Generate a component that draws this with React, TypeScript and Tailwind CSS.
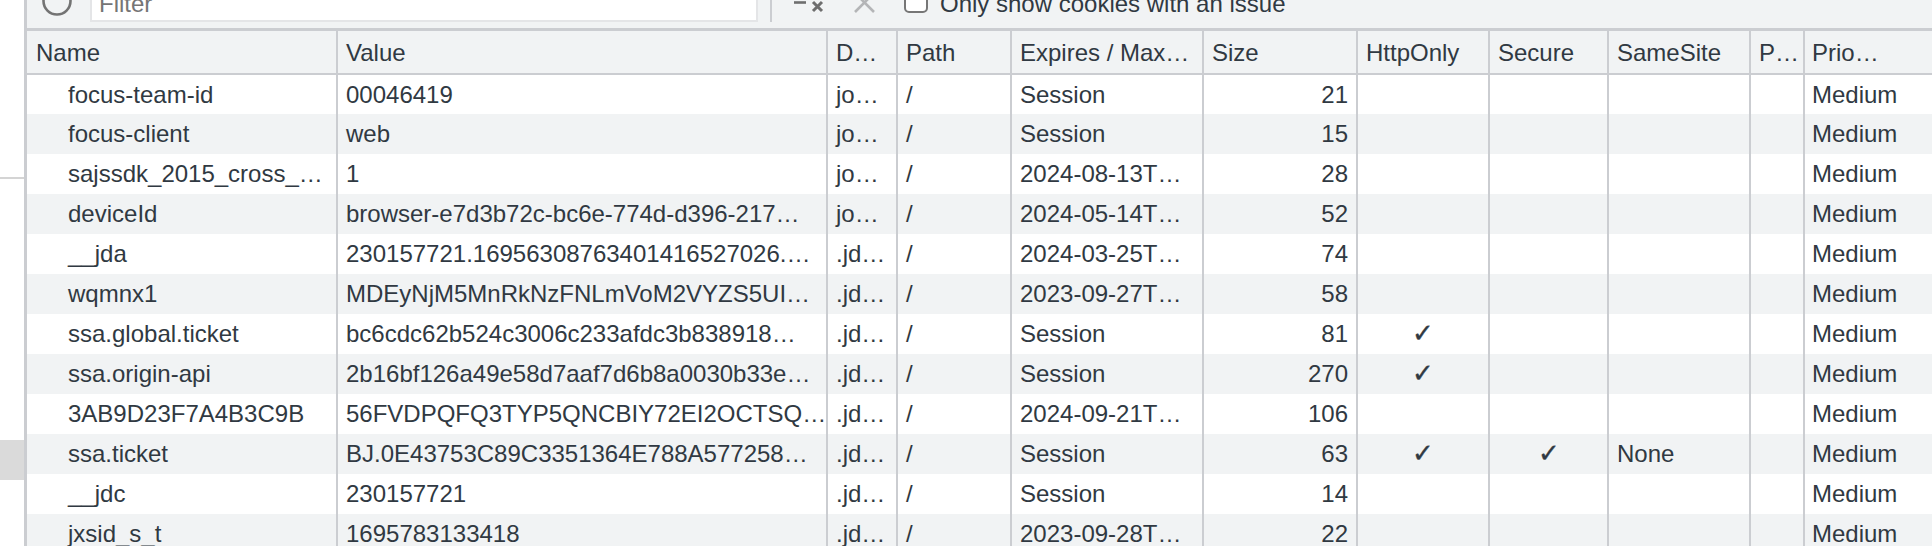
const widths = [310, 490, 70, 114, 192, 154, 132, 119, 142, 54, 129];

const rows: string[][] = [
  ["focus-team-id", "00046419", "jo…", "/", "Session", "21", "", "", "", "", "Medium"],
  ["focus-client", "web", "jo…", "/", "Session", "15", "", "", "", "", "Medium"],
  ["sajssdk_2015_cross_…", "1", "jo…", "/", "2024-08-13T…", "28", "", "", "", "", "Medium"],
  ["deviceId", "browser-e7d3b72c-bc6e-774d-d396-217…", "jo…", "/", "2024-05-14T…", "52", "", "", "", "", "Medium"],
  ["__jda", "230157721.16956308763401416527026.…", ".jd…", "/", "2024-03-25T…", "74", "", "", "", "", "Medium"],
  ["wqmnx1", "MDEyNjM5MnRkNzFNLmVoM2VYZS5UI…", ".jd…", "/", "2023-09-27T…", "58", "", "", "", "", "Medium"],
  ["ssa.global.ticket", "bc6cdc62b524c3006c233afdc3b838918…", ".jd…", "/", "Session", "81", "✓", "", "", "", "Medium"],
  ["ssa.origin-api", "2b16bf126a49e58d7aaf7d6b8a0030b33e…", ".jd…", "/", "Session", "270", "✓", "", "", "", "Medium"],
  ["3AB9D23F7A4B3C9B", "56FVDPQFQ3TYP5QNCBIY72EI2OCTSQ…", ".jd…", "/", "2024-09-21T…", "106", "", "", "", "", "Medium"],
  ["ssa.ticket", "BJ.0E43753C89C3351364E788A577258…", ".jd…", "/", "Session", "63", "✓", "✓", "None", "", "Medium"],
  ["__jdc", "230157721", ".jd…", "/", "Session", "14", "", "", "", "", "Medium"],
  ["jxsid_s_t", "1695783133418", ".jd…", "/", "2023-09-28T…", "22", "", "", "", "", "Medium"],
];

const headers = ["Name", "Value", "D…", "Path", "Expires / Max…", "Size", "HttpOnly", "Secure", "SameSite", "P…", "Prio…"];

function cellClass(col: number) {
  const base = "overflow-hidden whitespace-nowrap p-0 align-middle";
  const border = col < 10 ? " border-r-2 border-[#cbcdd1]" : "";
  if (col === 0) return base + border + " pl-[41px]";
  if (col === 5) return base + border + " pr-[8px] text-right";
  if (col === 6 || col === 7) return base + border + " text-center";
  if (col === 10) return base + border + " pl-[7px]";
  return base + border + " pl-[8px]";
}

function headerPad(col: number) {
  if (col === 0) return "pl-[9px]";
  if (col === 10) return "pl-[7px]";
  return "pl-[8px]";
}

export default function App() {
  return (
    <div className="flex h-[546px] w-[1932px] overflow-hidden bg-white font-['Liberation_Sans',Arial,sans-serif] text-[24px] text-[#303942]">
      <div className="w-[24px] shrink-0">
        <div className="mt-[177px] h-[2px] bg-[#d4d4d4]" />
        <div className="mt-[261px] h-[40px] bg-[#dadada]" />
      </div>
      <div className="flex min-w-0 flex-1 flex-col border-l-[3px] border-[#cbcdd1]">
        <div className="flex h-[28px] shrink-0 items-end overflow-hidden bg-[#f1f3f4] text-[#303942]">
          <svg width="44" height="44" viewBox="0 0 44 44" className="mb-[5px] ml-[8px] shrink-0" fill="none">
            <circle cx="22" cy="22" r="13.5" stroke="#737373" strokeWidth="2.6" />
          </svg>
          <div className="mb-[6px] ml-[11px] flex h-[36px] w-[668px] shrink-0 items-center border-[2px] border-[#e4e5e7] bg-white pl-[7px] text-[#757575]">
            Filter
          </div>
          <div className="mb-[6px] ml-[12px] h-[24px] w-[2px] shrink-0 bg-[#cbcdd1]" />
          <svg width="32" height="24" viewBox="0 0 32 24" className="mb-[10px] ml-[22px] shrink-0" fill="none" stroke="#6e6e6e">
            <path d="M0 8.5h12" strokeWidth="2.6" />
            <path d="M19 8l9 9M28 8l-9 9" strokeWidth="3" />
          </svg>
          <svg width="24" height="24" viewBox="0 0 24 24" className="mb-[13px] ml-[27px] shrink-0" fill="none" stroke="#b4b5b7" strokeWidth="2.6">
            <path d="M2 2l19 19M21 2L2 21" />
          </svg>
          <div className="mb-[15px] ml-[27px] h-[24px] w-[24px] shrink-0 rounded-[5px] border-[2px] border-[#767676] bg-white" />
          <div className="mb-[12px] ml-[12px] shrink-0 whitespace-nowrap leading-[24px]">Only show cookies with an issue</div>
        </div>
        <div className="h-[3px] shrink-0 bg-[#cbcdd1]" />
        <table className="w-full table-fixed border-collapse">
          <colgroup>
            {widths.map((w, i) => (
              <col key={i} style={{ width: w }} />
            ))}
          </colgroup>
          <thead>
            <tr className="h-[43px] bg-[#f1f3f4]">
              {headers.map((h, i) => (
                <th key={h} className={`overflow-hidden whitespace-nowrap p-0 pt-[1px] ${headerPad(i)} text-left align-middle font-normal ${i < 10 ? "border-r-2 border-[#cbcdd1]" : ""} border-b-[2px] border-b-[#cbcdd1]`}>
                  {h}
                </th>
              ))}
            </tr>
          </thead>
          <tbody>
            {rows.map((row, r) => (
              <tr key={r} className={r % 2 === 0 ? "h-[40px] bg-white" : "h-[40px] bg-[#f1f3f4]"}>
                {row.map((c, i) => (
                  <td key={i} className={cellClass(i)}>
                    {c === "✓" ? (
                      <span className="text-[26px] leading-none [-webkit-text-stroke:0.4px_#303942]">{c}</span>
                    ) : (
                      c
                    )}
                  </td>
                ))}
              </tr>
            ))}
          </tbody>
        </table>
      </div>
    </div>
  );
}
